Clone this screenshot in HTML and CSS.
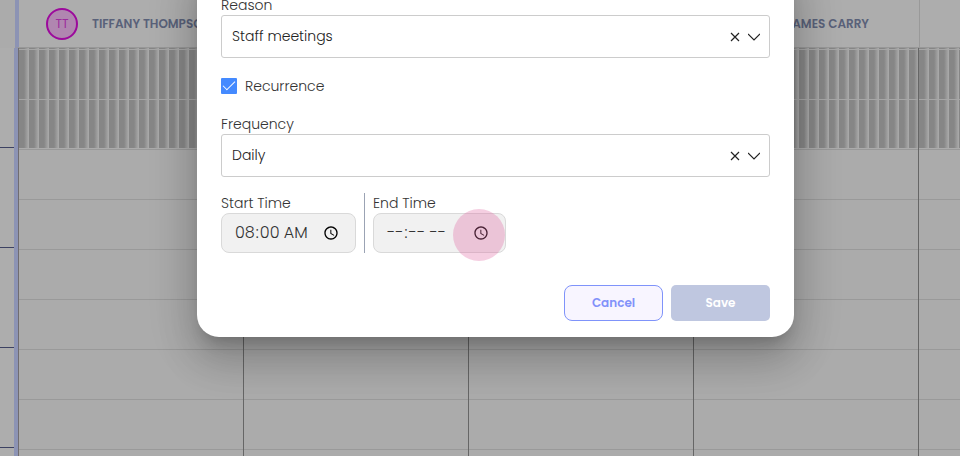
FILE: index.html
```html
<!DOCTYPE html>
<html lang="en">
<head>
    <meta charset="utf-8">
    <title>Schedule</title>
    <link rel="stylesheet" href="styles.css">
</head>
<body>
    <div class="calendar">
        <header class="staff-header">
            <div class="staff">
                <span class="avatar">TT</span>
                <span>TIFFANY THOMPSON</span>
            </div>
            <div class="staff"></div>
            <div class="staff"></div>
            <div class="staff staff-last">JAMES CARRY</div>
            <div class="staff staff-next"></div>
        </header>
        <main class="schedule">
            <div class="hours"></div>
            <div class="slots">
                <div class="closed"></div>
            </div>
        </main>
    </div>

    <div class="overlay">
        <form class="modal" role="dialog" aria-label="Block time">
            <div class="field">
                <label for="reason">Reason</label>
                <div class="select-box">
                    <select id="reason">
                        <option>Staff meetings</option>
                    </select>
                    <div class="select-icons">
                        <button type="button" class="clear" aria-label="Clear reason">
                            <svg width="10" height="10" viewBox="0 0 10 10"><path d="M1 1l8 8M9 1L1 9"/></svg>
                        </button>
                        <svg class="chevron" width="12" height="8" viewBox="0 0 12 8"><path d="M0 1l6 6 6-6"/></svg>
                    </div>
                </div>
            </div>

            <label class="check">
                <input type="checkbox" checked>
                <span>Recurrence</span>
            </label>

            <div class="field">
                <label for="frequency">Frequency</label>
                <div class="select-box">
                    <select id="frequency">
                        <option>Daily</option>
                    </select>
                    <div class="select-icons">
                        <button type="button" class="clear" aria-label="Clear frequency">
                            <svg width="10" height="10" viewBox="0 0 10 10"><path d="M1 1l8 8M9 1L1 9"/></svg>
                        </button>
                        <svg class="chevron" width="12" height="8" viewBox="0 0 12 8"><path d="M0 1l6 6 6-6"/></svg>
                    </div>
                </div>
            </div>

            <div class="times">
                <div class="time time-start">
                    <label for="start">Start Time</label>
                    <input type="time" id="start" value="08:00">
                </div>
                <div class="time time-end">
                    <label for="end">End Time</label>
                    <input type="time" id="end">
                    <span class="pointer"></span>
                </div>
            </div>

            <div class="actions">
                <button type="button" class="btn cancel">Cancel</button>
                <button type="submit" class="btn save" disabled>Save</button>
            </div>
        </form>
    </div>
</body>
</html>
```
FILE: styles.css
```css
* {
    box-sizing: border-box;
}

body {
    margin: 0;
    height: 100vh;
    overflow: hidden;
    position: relative;
    font-family: Poppins, Inter, sans-serif;
    font-size: 14px;
    font-weight: 300;
    line-height: 20px;
    color: #333;
    background: #ababab;
}

button, input, select {
    font: inherit;
}

.calendar {
    height: 100%;
    display: flex;
    flex-direction: column;
}

.staff-header {
    display: flex;
    flex: none;
    height: 48px;
    margin-left: 15px;
    border-left: 4px solid #8c93b4;
    border-bottom: 1px solid #989898;
    background: #adadad;
    overflow: hidden;
}

.staff {
    flex: none;
    width: 225px;
    display: flex;
    align-items: center;
    gap: 14px;
    padding-left: 27px;
    font-size: 12px;
    font-weight: 600;
    color: #596179;
    white-space: nowrap;
}

.staff-last {
    justify-content: flex-end;
    padding-right: 50px;
}

.staff-next {
    border-left: 1px solid #999;
}

.avatar {
    width: 32px;
    height: 32px;
    display: flex;
    align-items: center;
    justify-content: center;
    border: 2px solid #9c0a9c;
    border-radius: 50%;
    background: #b086b0;
    color: #9c2c9c;
    font-weight: 400;
}

.schedule {
    flex: 1;
    display: flex;
}

.hours {
    width: 18px;
    border-right: 4px solid #8c93b4;
    background: repeating-linear-gradient(#adadad 0 99px, #3c4162 99px 100px);
}

.slots {
    flex: 1;
    border-left: 1px solid #706c70;
    background:
        repeating-linear-gradient(90deg, transparent 0 224px, #666 224px 225px),
        repeating-linear-gradient(transparent 0 1px, #999 1px 2px, transparent 2px 50px);
}

.closed {
    height: 100px;
    background:
        repeating-linear-gradient(90deg, transparent 0 224px, #666 224px 225px),
        repeating-linear-gradient(transparent 0 1px, #a6a6a6 1px 2px, transparent 2px 50px),
        repeating-linear-gradient(90deg, #868686 0 5px, #acacac 10px);
}

.overlay {
    position: absolute;
    inset: 0;
    display: flex;
    justify-content: center;
    align-items: flex-start;
    padding-left: 31px;
    overflow: hidden;
}

.modal {
    width: 100%;
    max-width: 597px;
    margin-top: -32px;
    padding: 27px 24px 16px;
    border-radius: 0 0 22px 22px;
    background: #fff;
    box-shadow: 0 11px 15px -7px rgba(0, 0, 0, 0.2),
        0 24px 38px 3px rgba(0, 0, 0, 0.14),
        0 9px 46px 8px rgba(0, 0, 0, 0.12);
}

.field label, .time label {
    display: block;
}

.select-box {
    position: relative;
}

.select-box select {
    display: block;
    width: 100%;
    height: 43px;
    padding: 0 56px 1px 10px;
    appearance: none;
    border: 1px solid #ccc;
    border-radius: 3px;
    background: #fff;
    color: #222;
}

.select-icons {
    position: absolute;
    top: 0;
    right: 10px;
    bottom: 0;
    display: flex;
    align-items: center;
    gap: 8px;
    pointer-events: none;
}

.clear {
    display: flex;
    padding: 0;
    border: 0;
    background: none;
    pointer-events: auto;
}

.clear svg, .chevron {
    fill: none;
    stroke: #222;
    stroke-width: 1.2;
}

.check {
    display: flex;
    align-items: center;
    gap: 8px;
    margin: 18px 0;
}

.check input {
    appearance: none;
    width: 16px;
    height: 16px;
    margin: 0;
    border-radius: 1px;
    background: #448aff;
    display: grid;
    place-items: center;
}

.check input:checked::before {
    content: "";
    width: 11px;
    height: 5px;
    border: solid #fff;
    border-width: 0 0 1px 1px;
    transform: translateY(-2px) rotate(-45deg);
}

.times {
    display: flex;
    gap: 8px;
    margin-top: 16px;
}

.time {
    position: relative;
}

.time-end {
    padding-left: 8px;
    border-left: 1px solid #9ba3b4;
}

.time input {
    display: block;
    width: 135px;
    height: 40px;
    padding: 0 12px;
    border: 1px solid #d9d9d9;
    border-radius: 8px;
    background: #f1f1f1;
    color: #333;
    font-size: 16px;
}

.time-end input {
    width: 133px;
}

/* touch highlight over the clock icon */
.pointer {
    position: absolute;
    right: 1px;
    bottom: -8px;
    width: 52px;
    height: 52px;
    border-radius: 50%;
    background: rgba(224, 102, 163, 0.32);
    pointer-events: none;
}

.actions {
    display: flex;
    justify-content: flex-end;
    gap: 8px;
    margin-top: 32px;
}

.btn {
    width: 99px;
    height: 36px;
    border: 0;
    border-radius: 5px;
    font-size: 12px;
    font-weight: 600;
}

.cancel {
    border: 1px solid #7f93fa;
    border-radius: 8px;
    background: #f8f5ff;
    color: #8291fa;
}

.save {
    background: #bfc7e0;
    color: #fff;
}
```
